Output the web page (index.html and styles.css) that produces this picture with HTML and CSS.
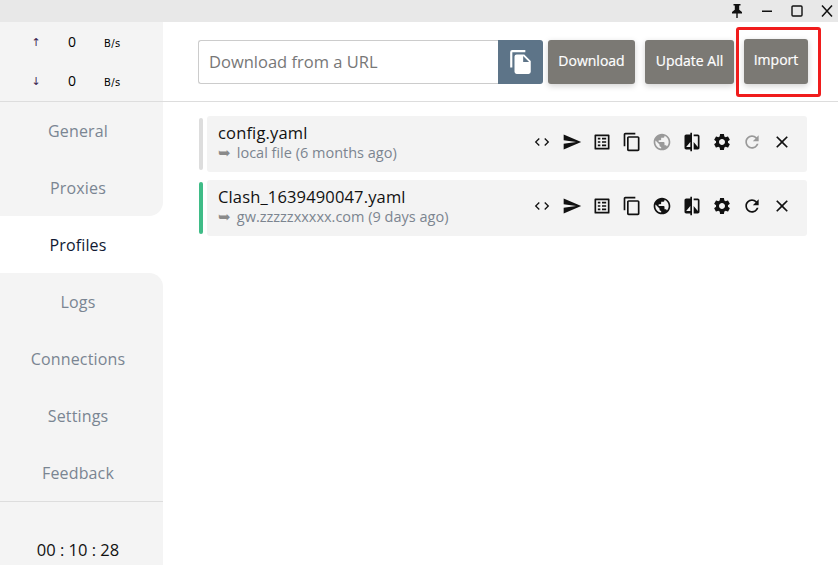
FILE: index.html
```html
<!DOCTYPE html>
<html lang="en">
<head>
<meta charset="utf-8">
<title>Profiles</title>
<link rel="stylesheet" href="styles.css">
</head>
<body>
<svg class="defs" width="0" height="0" aria-hidden="true">
  <symbol id="i-code" viewBox="0 0 24 24"><path d="M8.6 16.6 4 12l4.6-4.6L7.2 6l-6 6 6 6zm6.8 0L20 12l-4.6-4.6L16.8 6l6 6-6 6z"/></symbol>
  <symbol id="i-send" viewBox="0 0 24 24"><path d="M2 21l21-9L2 3v7l15 2-15 2z"/></symbol>
  <symbol id="i-table" viewBox="0 0 24 24"><path fill-rule="evenodd" d="M4 3h16a1 1 0 0 1 1 1v16a1 1 0 0 1-1 1H4a1 1 0 0 1-1-1V4a1 1 0 0 1 1-1zm1 2v14h14V5zm2 2h3v2H7zm5 0h5v2h-5zm-5 4h3v2H7zm5 0h5v2h-5zm-5 4h3v2H7zm5 0h5v2h-5z"/></symbol>
  <symbol id="i-copy" viewBox="0 0 24 24"><path d="M16 1H4c-1.100 0-2 .9-2 2v14h2V3h12zm3 4H8c-1.100 0-2 .9-2 2v14c0 1.100.9 2 2 2h11c1.100 0 2-.9 2-2V7c0-1.100-.9-2-2-2zm0 16H8V7h11z"/></symbol>
  <symbol id="i-globe" viewBox="0 0 24 24"><path d="M12 2C6.480 2 2 6.480 2 12s4.480 10 10 10 10-4.480 10-10S17.520 2 12 2zm-1 17.930c-3.950-.49-7-3.850-7-7.930 0-.62.080-1.210.21-1.790L9 15v1c0 1.100.9 2 2 2zm6.900-2.540c-.26-.81-1-1.390-1.900-1.390h-1v-3c0-.55-.45-1-1-1H8v-2h2c.55 0 1-.45 1-1V7h2c1.100 0 2-.9 2-2v-.41c2.930 1.190 5 4.060 5 7.410 0 2.080-.8 3.970-2.100 5.390z"/></symbol>
  <symbol id="i-compare" viewBox="0 0 24 24"><path d="M10 3H5c-1.100 0-2 .9-2 2v14c0 1.100.9 2 2 2h5v2h2V1h-2zm0 15H5l5-6zm9-15h-5v2h5v13l-5-6v9h5c1.100 0 2-.9 2-2V5c0-1.100-.9-2-2-2z"/></symbol>
  <symbol id="i-gear" viewBox="0 0 24 24"><path d="M19.140 12.940c.04-.3.060-.61.060-.94 0-.32-.02-.64-.07-.94l2.030-1.580c.18-.14.230-.41.120-.61l-1.920-3.320c-.12-.22-.37-.29-.59-.22l-2.390.96c-.5-.38-1.030-.7-1.620-.94l-.36-2.540c-.04-.24-.24-.41-.48-.41h-3.840c-.24 0-.43.170-.47.410l-.36 2.540c-.59.240-1.130.570-1.620.94l-2.390-.96c-.22-.08-.47 0-.59.220L2.740 8.870c-.12.210-.08.470.12.610l2.030 1.580c-.05.300-.09.630-.09.940s.02.640.07.940l-2.030 1.580c-.18.140-.23.410-.12.610l1.920 3.320c.12.220.37.290.59.220l2.390-.96c.5.380 1.030.7 1.620.94l.36 2.540c.05.240.24.410.48.410h3.840c.24 0 .44-.17.470-.41l.36-2.540c.59-.24 1.130-.56 1.620-.94l2.390.96c.22.080.47 0 .59-.22l1.920-3.320c.12-.22.070-.47-.12-.61zM12 15.600c-1.980 0-3.600-1.620-3.600-3.600s1.620-3.600 3.600-3.600 3.600 1.620 3.600 3.600-1.620 3.600-3.600 3.600z"/></symbol>
  <symbol id="i-refresh" viewBox="0 0 24 24"><path d="M17.650 6.350C16.200 4.900 14.210 4 12 4c-4.420 0-7.990 3.580-7.990 8s3.570 8 7.990 8c3.730 0 6.840-2.550 7.730-6h-2.080c-.82 2.330-3.040 4-5.650 4-3.310 0-6-2.690-6-6s2.690-6 6-6c1.660 0 3.140.69 4.220 1.780L13 11h7V4z"/></symbol>
  <symbol id="i-close" viewBox="0 0 24 24"><path d="M19 6.410 17.590 5 12 10.590 6.410 5 5 6.410 10.590 12 5 17.590 6.410 19 12 13.410 17.590 19 19 17.590 13.410 12z"/></symbol>
</svg>

<header class="titlebar">
  <svg class="win-icon" viewBox="0 0 12 14"><path d="M2.500 0h7v1.500H8.200v4.300L11 8v1.500H6.700V14h-1.400V9.500H1V8l2.800-2.200V1.500H2.500z"/></svg>
  <svg class="win-icon" viewBox="0 0 12 14"><rect x="1" y="6.500" width="10" height="1.500"/></svg>
  <svg class="win-icon" viewBox="0 0 12 14"><rect class="win-outline" x="1" y="2" width="10" height="10" rx="1"/></svg>
  <svg class="win-icon" viewBox="0 0 12 14"><path class="win-line" d="M1 1.500l10 11M11 1.500l-10 11"/></svg>
</header>

<div class="app">
  <aside class="sidebar">
    <div class="traffic">
      <div class="traffic-row"><span class="arrow">↑</span><span class="rate">0</span><span class="unit">B/s</span></div>
      <div class="traffic-row"><span class="arrow">↓</span><span class="rate">0</span><span class="unit">B/s</span></div>
    </div>
    <nav class="nav">
      <a class="nav-item">General</a>
      <a class="nav-item before-active">Proxies</a>
      <a class="nav-item active">Profiles</a>
      <a class="nav-item after-active">Logs</a>
      <a class="nav-item">Connections</a>
      <a class="nav-item">Settings</a>
      <a class="nav-item">Feedback</a>
    </nav>
    <div class="uptime">00 : 10 : 28</div>
  </aside>

  <main class="main">
    <div class="toolbar">
      <div class="url-group">
        <input class="url-input" type="text" placeholder="Download from a URL">
        <button class="paste-btn" aria-label="Paste">
          <svg viewBox="0 0 24 24"><path d="M16 1H4a2 2 0 0 0-2 2v14h2V3h12zm-1 4 6 6v10a2 2 0 0 1-2 2H8a2 2 0 0 1-2-2V7a2 2 0 0 1 2-2zm-1 7h5.500L14 6.500z"/></svg>
        </button>
      </div>
      <button class="action download">Download</button>
      <button class="action update">Update All</button>
      <div class="highlight"><button class="action import">Import</button></div>
    </div>

    <div class="profiles">
      <div class="profile">
        <span class="marker"></span>
        <div class="card">
          <div class="info">
            <div class="name">config.yaml</div>
            <div class="source"><span class="src-arrow">➥</span> local file (6 months ago)</div>
          </div>
          <div class="tools">
            <svg class="tool small"><use href="#i-code"/></svg>
            <svg class="tool"><use href="#i-send"/></svg>
            <svg class="tool"><use href="#i-table"/></svg>
            <svg class="tool"><use href="#i-copy"/></svg>
            <svg class="tool off"><use href="#i-globe"/></svg>
            <svg class="tool"><use href="#i-compare"/></svg>
            <svg class="tool"><use href="#i-gear"/></svg>
            <svg class="tool off"><use href="#i-refresh"/></svg>
            <svg class="tool"><use href="#i-close"/></svg>
          </div>
        </div>
      </div>
      <div class="profile selected">
        <span class="marker"></span>
        <div class="card">
          <div class="info">
            <div class="name">Clash_1639490047.yaml</div>
            <div class="source"><span class="src-arrow">➥</span> gw.zzzzzxxxxx.com (9 days ago)</div>
          </div>
          <div class="tools">
            <svg class="tool small"><use href="#i-code"/></svg>
            <svg class="tool"><use href="#i-send"/></svg>
            <svg class="tool"><use href="#i-table"/></svg>
            <svg class="tool"><use href="#i-copy"/></svg>
            <svg class="tool"><use href="#i-globe"/></svg>
            <svg class="tool"><use href="#i-compare"/></svg>
            <svg class="tool"><use href="#i-gear"/></svg>
            <svg class="tool"><use href="#i-refresh"/></svg>
            <svg class="tool"><use href="#i-close"/></svg>
          </div>
        </div>
      </div>
    </div>
  </main>
</div>
</body>
</html>
```
FILE: styles.css
```css
* { box-sizing: border-box; }
html, body { margin: 0; height: 100%; overflow: hidden; }
body {
  font-family: "Open Sans", "Noto Sans", "Liberation Sans", sans-serif;
  background: #fff;
  color: #000;
}
.defs { position: absolute; }

.titlebar {
  height: 22px;
  background: #e8e8e8;
  display: flex;
  justify-content: flex-end;
  align-items: center;
  gap: 16px;
  padding-right: 4px;
}
.win-icon { width: 14px; height: 14px; fill: #111; }
.win-outline { fill: none; stroke: #111; stroke-width: 1.400; }
.win-line { fill: none; stroke: #111; stroke-width: 1.500; }

.app { display: flex; height: 543px; }

.sidebar {
  width: 163px;
  flex: none;
  background: #f4f4f4;
  display: flex;
  flex-direction: column;
}
.traffic {
  height: 80px;
  border-bottom: 1px solid #ddd;
  display: flex;
  flex-direction: column;
}
.traffic-row {
  height: 39px;
  display: grid;
  grid-template-columns: 28px 44px 50px;
  padding-left: 22px;
  align-items: center;
  font-size: 14px;
}
.arrow { font-size: 11px; color: #3a2450; text-align: center; font-family: "DejaVu Sans", sans-serif; padding-top: 2px; }
.rate { text-align: center; }
.unit { font-size: 10px; font-family: "DejaVu Sans", sans-serif; letter-spacing: .4px; padding: 4px 0 0 10px; }

.nav { display: flex; flex-direction: column; background: #fff; height: 400px; border-bottom: 1px solid #ddd; }
.nav-item {
  height: 57px;
  flex: none;
  display: flex;
  align-items: center;
  justify-content: center;
  padding-right: 7px;
  font-size: 16px;
  letter-spacing: .15px;
  color: #7a8592;
  background: #f4f4f4;
}
.nav-item.before-active { border-bottom-right-radius: 14px; }
.nav-item.after-active { border-top-right-radius: 14px; }
.nav-item.active { background: #fff; color: #111a33; }
.nav-item:last-child { flex: 1; }

.uptime {
  flex: 1;
  display: flex;
  justify-content: center;
  align-items: flex-end;
  padding: 0 7px 4px 0;
  font-size: 16.500px;
  color: #111;
}

.main { flex: 1; min-width: 0; }
.toolbar {
  height: 80px;
  border-bottom: 1px solid #ddd;
  padding: 18px 0 0 35px;
  display: flex;
  align-items: flex-start;
  position: relative;
}
.url-group { display: flex; height: 44px; width: 345px; }
.url-input {
  width: 300px;
  height: 44px;
  border: 1px solid #ccc;
  border-right: none;
  border-radius: 3px 0 0 3px;
  padding: 0 10px 2px;
  font: inherit;
  font-size: 16.500px;
  outline: none;
}
.url-input::placeholder { color: #777; opacity: 1; }
.paste-btn {
  width: 45px;
  height: 44px;
  border: none;
  border-radius: 0 3px 3px 0;
  background: #5d7488;
  padding: 0;
  display: flex;
  align-items: center;
  justify-content: center;
}
.paste-btn svg { width: 26px; height: 26px; fill: #fff; }
.action {
  border: none;
  height: 44px;
  border-radius: 3px;
  background: #7b7974;
  color: #fff;
  font: inherit;
  font-size: 14px;
  -webkit-text-stroke: .2px #fff;
  padding: 0 0 4px;
  box-shadow: 0 2px 6px rgba(0,0,0,.18);
}
.download { width: 87px; margin-left: 5px; }
.update { width: 89px; margin-left: 10px; }
.import { width: 64px; height: 45px; }
.highlight {
  position: absolute;
  left: 573px;
  top: 5px;
  width: 85px;
  height: 70px;
  border: 3px solid #f01c1c;
  border-radius: 3px;
  padding: 9px 0 0 5px;
}

.profiles { padding: 14px 31px 0 36px; display: flex; flex-direction: column; gap: 8px; }
.profile { display: flex; align-items: center; gap: 4px; }
.marker { width: 4px; height: 52px; border-radius: 2px; background: #ddd; flex: none; }
.selected .marker { background: #3fbc87; }
.card {
  flex: 1;
  height: 56px;
  background: #f3f3f3;
  border-radius: 3px;
  padding: 6px 15px 0 11px;
  display: flex;
  justify-content: space-between;
}
.name { font-size: 16.500px; letter-spacing: .15px; line-height: 22px; color: #111; }
.source { font-size: 14.500px; line-height: 18px; color: #7c8590; }
.src-arrow { color: #8a8a8a; margin-right: 2px; }
.tools { display: flex; gap: 10px; align-items: center; height: 40px; }
.tool { width: 20px; height: 20px; fill: #111; }
.tool.small { transform: scale(.8); }
.tool.off { fill: #999; }
```
